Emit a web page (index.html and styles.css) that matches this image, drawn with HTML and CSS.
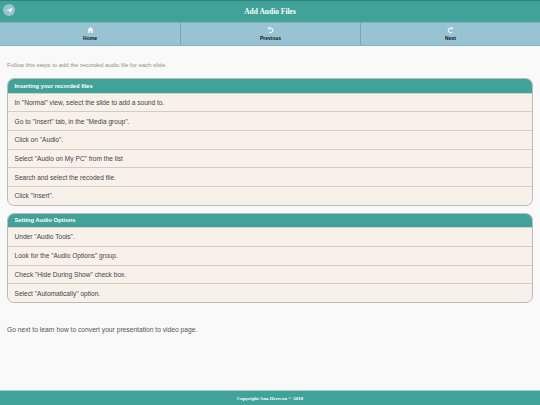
FILE: index.html
```html
<!DOCTYPE html>
<html lang="en">
<head>
  <meta charset="UTF-8" />
  <meta name="viewport" content="width=device-width, initial-scale=1.0"/>
  <title>Add Audio Files</title>
  <link rel="stylesheet" href="styles.css">
</head>
<body>

  <!-- Header -->
  <header class="header">
    <a class="back-btn" href="#">
      <svg width="10" height="10" viewBox="0 0 10 10"><path d="M0.5 5 L9.5 1 L6 9 L5 5.4 Z" fill="#fff"/></svg>
    </a>
    <h1 class="title">Add Audio Files</h1>
  </header>

  <!-- Nav bar -->
  <nav class="navbar">
    <a class="nav-item" href="#">
      <svg class="nav-icon" viewBox="0 0 10 10"><path d="M5 0.8 L9.4 5 H8 V9.2 H6 V6.4 H4 V9.2 H2 V5 H0.6 Z" fill="#fff"/></svg>
      <span>Home</span>
    </a>
    <a class="nav-item" href="#">
      <svg class="nav-icon" viewBox="0 0 10 10"><path d="M2.6 3.2 A3.2 3.2 0 1 1 3 8" fill="none" stroke="#fff" stroke-width="1.5"/><path d="M0.8 1.4 L4.4 1.4 L3.4 5 Z" fill="#fff"/></svg>
      <span>Previous</span>
    </a>
    <a class="nav-item" href="#">
      <svg class="nav-icon" viewBox="0 0 10 10"><path d="M7.4 3.2 A3.2 3.2 0 1 0 7 8" fill="none" stroke="#fff" stroke-width="1.5"/><path d="M9.2 1.4 L5.6 1.4 L6.6 5 Z" fill="#fff"/></svg>
      <span>Next</span>
    </a>
  </nav>

  <main class="content">
    <p class="intro">Follow this steps to add the recorded audio file for each slide.</p>

    <!-- Inserting steps -->
    <ul class="list">
      <li class="list-head">Inserting your recorded files</li>
      <li>In "Normal" view, select the slide to add a sound to.</li>
      <li>Go to "Insert" tab, in the "Media group".</li>
      <li>Click on "Audio".</li>
      <li>Select "Audio on My PC" from the list</li>
      <li>Search and select the recoded file.</li>
      <li>Click "Insert".</li>
    </ul>

    <!-- Audio options -->
    <ul class="list">
      <li class="list-head">Setting Audio Options</li>
      <li>Under "Audio Tools".</li>
      <li>Look for the "Audio Options" group.</li>
      <li>Check "Hide During Show" check box.</li>
      <li>Select "Automatically" option.</li>
    </ul>

    <p class="next-note">Go next to learn how to convert your presentation to video page.</p>
  </main>

  <footer class="footer">Copyright Ana Herrera © 2018</footer>

</body>
</html>
```

FILE: styles.css
```css
* {
  box-sizing: border-box;
  margin: 0;
  padding: 0;
}

body {
  font-family: 'Liberation Sans', Arial, sans-serif;
  height: 405px;
  overflow: hidden;
  background-color: #f9f9f9;
  color: #333;
  display: flex;
  flex-direction: column;
}

.header {
  height: 22px;
  background: #40a298;
  border-top: 1px solid #2f8279;
  display: flex;
  align-items: center;
  justify-content: center;
  position: relative;
}

.title {
  font-family: 'Liberation Serif', serif;
  font-size: 7.5px;
  font-weight: bold;
  color: #fff;
}

.back-btn {
  position: absolute;
  left: 3px;
  top: 3px;
  width: 12px;
  height: 12px;
  border-radius: 50%;
  background: #98c3d3;
  display: flex;
  align-items: center;
  justify-content: center;
}

.back-btn svg {
  width: 7px;
  height: 7px;
}

.navbar {
  height: 24px;
  display: grid;
  grid-template-columns: repeat(3, 1fr);
  background: #98c3d3;
  border-top: 1px solid #7fb0bd;
  border-bottom: 1px solid #86b2c0;
}

.nav-item {
  display: flex;
  flex-direction: column;
  align-items: center;
  padding-top: 3px;
  gap: 1px;
  font-size: 5px;
  font-weight: bold;
  color: #111;
  text-decoration: none;
  border-left: 1px solid #7aa7b6;
}

.nav-item:first-child {
  border-left: none;
}

.nav-icon {
  width: 7px;
  height: 8px;
}

.content {
  flex: 1;
  padding: 0 7px;
}

.intro {
  margin-top: 15px;
  font-size: 5.9px;
  color: #8f8f8f;
  line-height: 8px;
}

.list {
  list-style: none;
  margin-top: 7px;
  border: 1px solid #bcbcb6;
  border-radius: 7px;
  overflow: hidden;
  background: #f8f1ea;
}

.intro + .list {
  margin-top: 9px;
}

.list li {
  height: 18.7px;
  padding: 0 6.5px;
  display: flex;
  align-items: center;
  font-size: 6.6px;
  color: #444;
  border-top: 1px solid #cfcdc8;
}

.list li.list-head {
  height: 13.5px;
  border-top: none;
  background: #40a298;
  color: #fff;
  font-size: 5.8px;
  font-weight: bold;
}

.next-note {
  margin-top: 23px;
  font-size: 6.7px;
  line-height: 8px;
  color: #555;
}

.footer {
  height: 15px;
  background: #40a298;
  border-top: 1px solid #9fcfc9;
  color: #fff;
  font-family: 'Liberation Serif', serif;
  font-size: 5px;
  font-weight: bold;
  display: flex;
  align-items: center;
  justify-content: center;
}
```
